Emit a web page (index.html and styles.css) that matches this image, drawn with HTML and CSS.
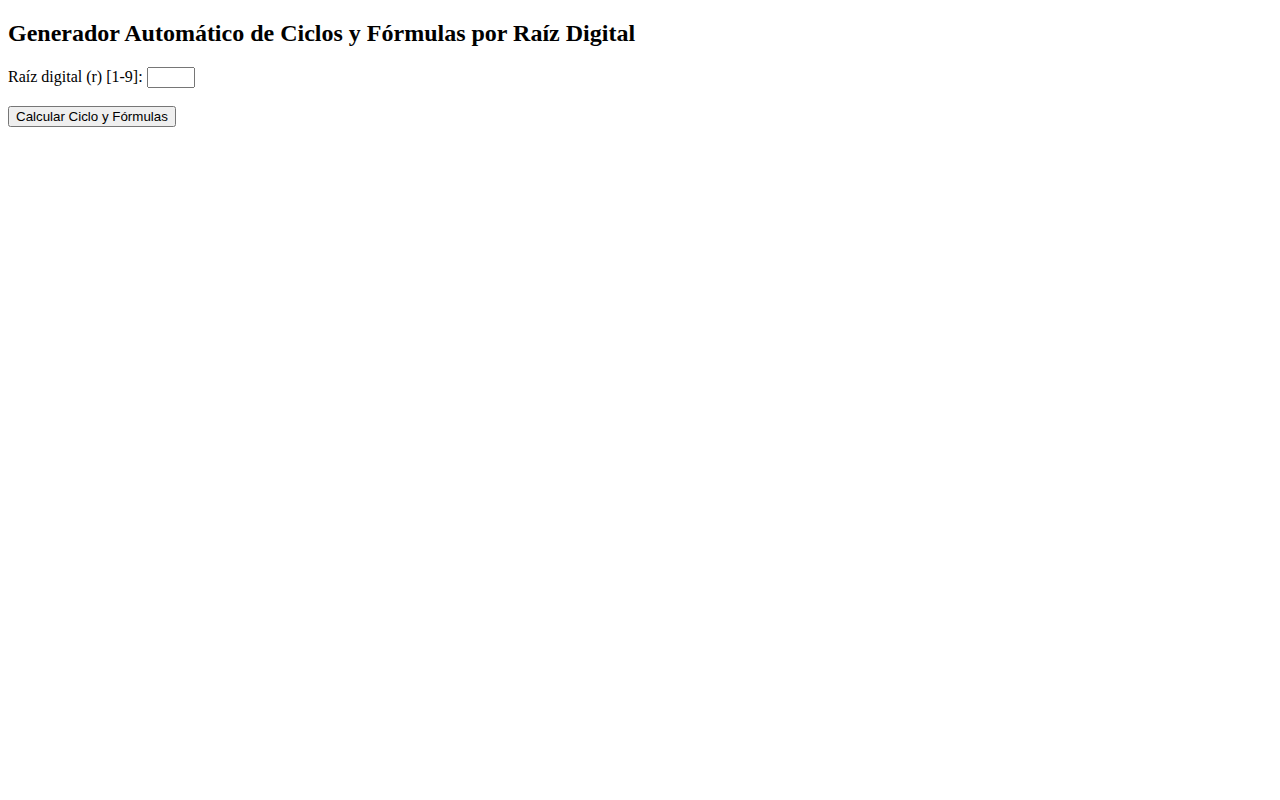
FILE: index.html
```html
<!DOCTYPE html>
<html lang="es">
<head>
<meta charset="utf-8">
<title>Generador Automático de Ciclos y Fórmulas por Raíz Digital</title>
<link rel="stylesheet" href="styles.css">
</head>
<body class="page">
<h2 class="title">Generador Automático de Ciclos y Fórmulas por Raíz Digital</h2>
<p class="row"><label class="label" for="r">Raíz digital (r) [1-9]:</label> <input class="num" id="r" type="number" min="1" max="9"></p>
<p class="row row-action"><button class="btn" type="button">Calcular Ciclo y Fórmulas</button></p>
</body>
</html>
```
FILE: styles.css
```css
.page {
  font-family: "Liberation Serif", "Times New Roman", serif;
  margin: 0 8px 8px;
  padding: 0;
  background: #fff;
  color: #000;
}
.title {
  margin: 19.92px 0;
}
.row {
  margin: 16px 0;
}
.row-action {
  margin-top: 18px;
}
.num {
  font-family: "Liberation Sans", Arial, sans-serif;
  font-size: 13.33px;
}
.btn {
  font-family: "Liberation Sans", Arial, sans-serif;
  font-size: 13.33px;
}
```
